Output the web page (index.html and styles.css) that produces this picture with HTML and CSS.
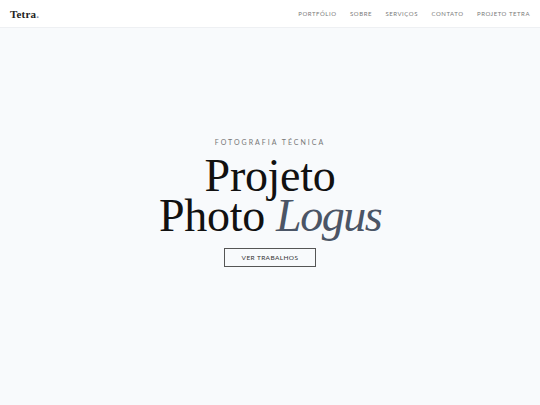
FILE: index.html
```html
<!DOCTYPE html>
<html lang="pt-BR">
<head>
  <meta charset="UTF-8">
  <title>Tetra. - Projeto Photo Logus</title>
  <link rel="stylesheet" href="styles.css">
</head>
<body>

  <header class="topbar">
    <a class="logo" href="#">Tetra<span class="logo-dot">.</span></a>
    <nav class="menu">
      <a href="#">Portfólio</a>
      <a href="#">Sobre</a>
      <a href="#">Serviços</a>
      <a href="#">Contato</a>
      <a href="#">Projeto Tetra</a>
    </nav>
  </header>

  <main class="hero">
    <p class="eyebrow">Fotografia Técnica</p>
    <h1 class="title">Projeto<br>Photo <em>Logus</em></h1>
    <a class="btn" href="#">Ver Trabalhos</a>
  </main>

</body>
</html>
```

FILE: styles.css
```css
* {
  box-sizing: border-box;
}
html, body {
  height: 100%;
}
body {
  margin: 0;
  background-color: #f8fafc;
  font-family: Lato, "Open Sans", sans-serif;
  color: #111;
  display: flex;
  flex-direction: column;
}
a {
  text-decoration: none;
  color: inherit;
}

.topbar {
  height: 28px;
  background: #fff;
  border-bottom: 1px solid #eef0f3;
  display: flex;
  align-items: center;
  justify-content: space-between;
  padding: 0 10px;
}
.logo {
  font-family: "Liberation Serif", serif;
  font-weight: bold;
  font-size: 11px;
  color: #222;
  letter-spacing: 0.2px;
}
.logo-dot {
  color: #8a94a6;
}
.menu {
  display: flex;
  gap: 13.5px;
}
.menu a {
  font-size: 6px;
  text-transform: uppercase;
  letter-spacing: 0.55px;
  color: #7a7a7a;
}

.hero {
  flex: 1;
  display: flex;
  flex-direction: column;
  align-items: center;
  justify-content: center;
  padding-bottom: 28px;
  text-align: center;
}
.eyebrow {
  margin: 0;
  font-size: 7px;
  letter-spacing: 2px;
  text-transform: uppercase;
  color: #777;
}
.title {
  margin: 10px 0 12px;
  font-family: "Liberation Serif", serif;
  font-weight: normal;
  font-size: 46px;
  line-height: 40px;
  letter-spacing: -0.3px;
  color: #111;
}
.title em {
  color: #4b5566;
  letter-spacing: -1.5px;
}
.btn {
  border: 1px solid #555;
  padding: 5px 17px;
  font-size: 6.5px;
  letter-spacing: 0.4px;
  text-transform: uppercase;
  color: #333;
}
```
